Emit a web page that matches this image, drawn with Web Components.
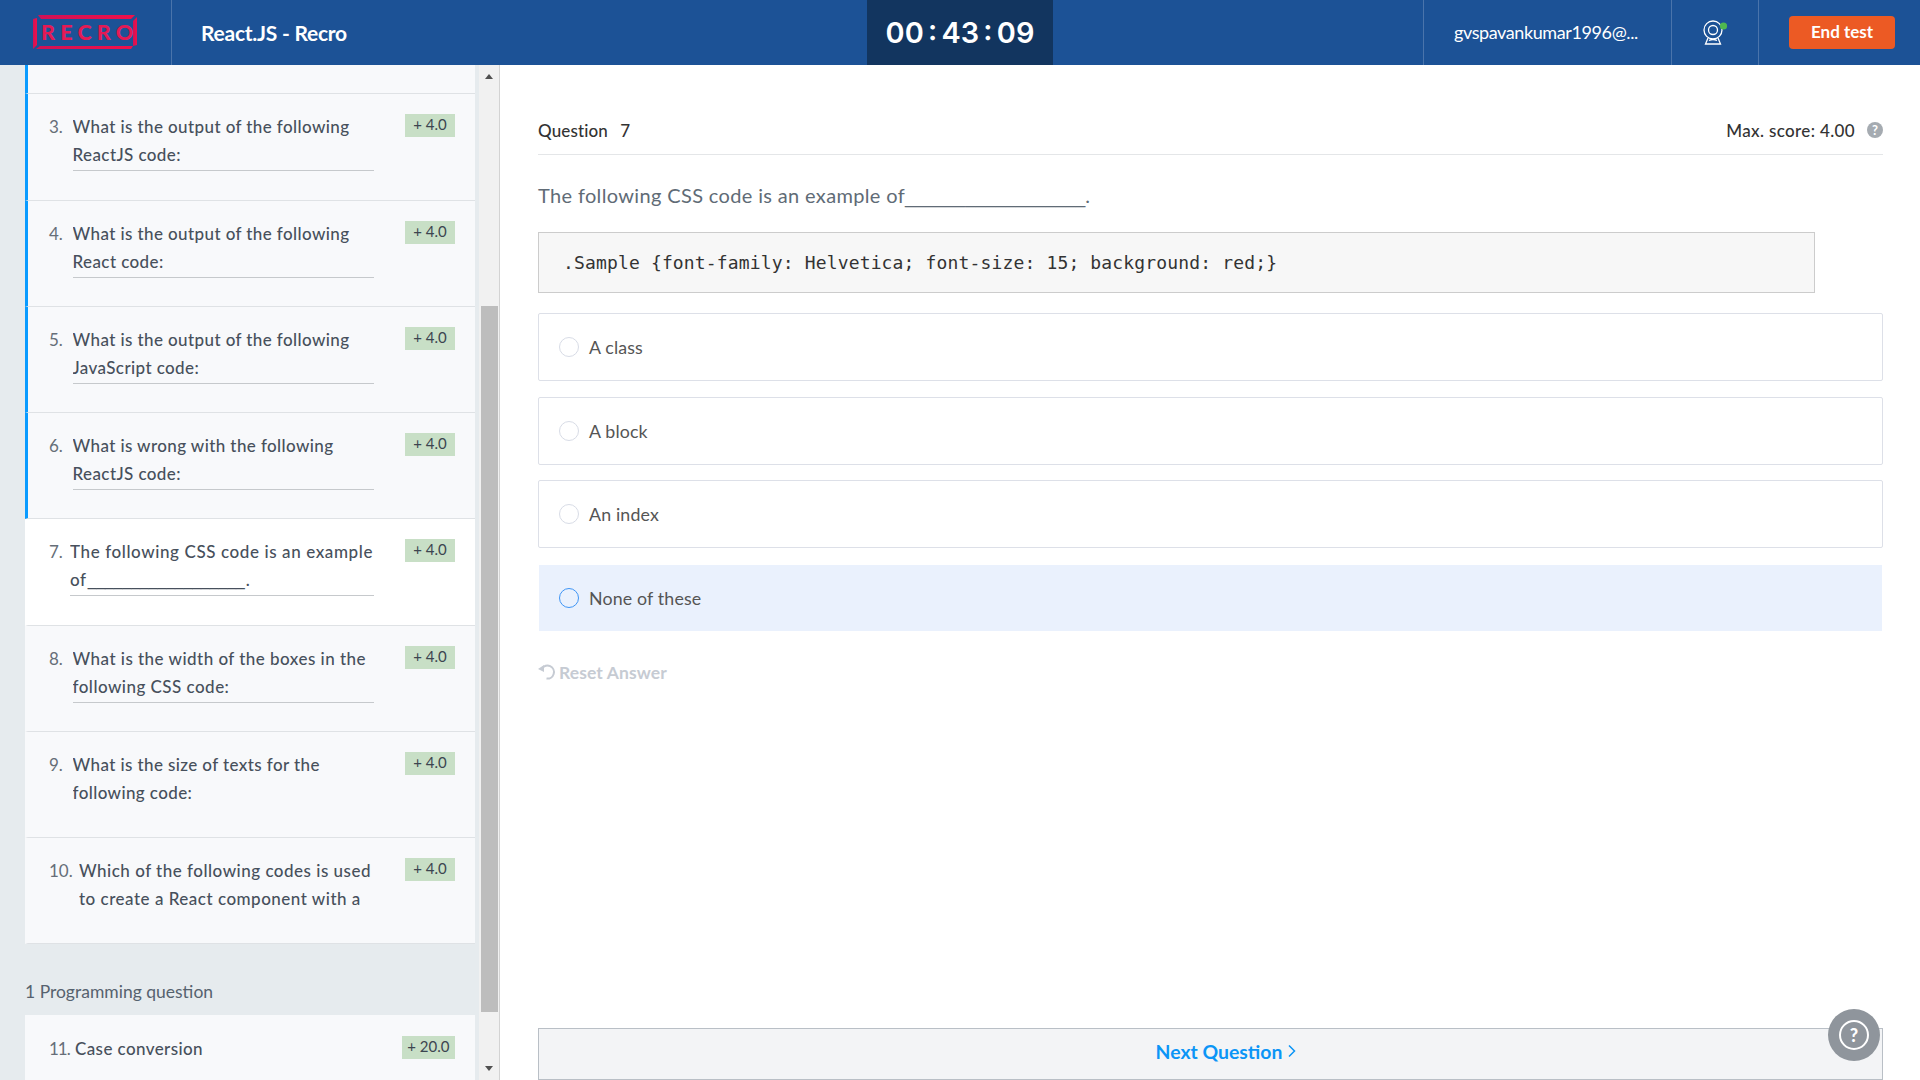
<!DOCTYPE html>
<html lang="en">
<head>
<meta charset="utf-8">
<title>React.JS - Recro</title>
<style>
  html, body { margin: 0; height: 100%; overflow: hidden; }
  body { font-family: "Lato", "Liberation Sans", sans-serif; background: #fff; }
  test-page { height: 100vh; }
  .blank { font-family: "Liberation Sans", sans-serif; font-size: 15.7px; line-height: 1; letter-spacing: 0; margin: 0 1px; }
  .blank-lg { font-family: "Liberation Sans", sans-serif; font-size: 18px; line-height: 1; letter-spacing: 0; }
</style>
</head>
<body>
<test-page>
  <test-header slot="header" name="React.JS - Recro" time="00 : 43 : 09" user="gvspavankumar1996@..."></test-header>
  <test-sidebar slot="side">
    <div class="stub"></div>
    <quiz-item num="3." score="+ 4.0" done lined style="--h:107px">What is the output of the following ReactJS code:</quiz-item>
    <quiz-item num="4." score="+ 4.0" done lined>What is the output of the following React code:</quiz-item>
    <quiz-item num="5." score="+ 4.0" done lined>What is the output of the following JavaScript code:</quiz-item>
    <quiz-item num="6." score="+ 4.0" done lined>What is wrong with the following ReactJS code:</quiz-item>
    <quiz-item num="7." score="+ 4.0" active lined style="--num:21px;--ls:.6px">The following CSS code is an example<br>of<span class="blank">__________________</span>.</quiz-item>
    <quiz-item num="8." score="+ 4.0" lined style="--ls:.47px">What is the width of the boxes in the following CSS code:</quiz-item>
    <quiz-item num="9." score="+ 4.0">What is the size of texts for the following code:</quiz-item>
    <quiz-item num="10." score="+ 4.0" style="--num:30px;--ls:.5px">Which of the following codes is used to create a React component with a</quiz-item>
    <section-title>1 Programming question</section-title>
    <quiz-item num="11." score="+ 20.0" style="--num:26px;--num-ls:-1px;--pt:20px">Case conversion</quiz-item>
  </test-sidebar>
  <question-panel slot="main" number="7" score="4.00">
    <span slot="text">The following CSS code is an example of<span class="blank-lg">__________________</span>.</span>
    <code-box slot="code">.Sample {font-family: Helvetica; font-size: 15; background: red;}</code-box>
    <answer-option>A class</answer-option>
    <answer-option>A block</answer-option>
    <answer-option>An index</answer-option>
    <answer-option selected>None of these</answer-option>
  </question-panel>
</test-page>
<help-button></help-button>

<script>
// small helper so each element just gives its css + markup
function shadow(el, html) {
  el.attachShadow({mode: "open"}).innerHTML = html;
}

class TestPage extends HTMLElement {
  constructor() {
    super();
    shadow(this, `
      <style>
        :host { display: grid; grid-template-columns: 500px 1fr; grid-template-rows: 65px 1fr; }
        .head { grid-column: 1 / 3; }
        .side, .main { min-height: 0; overflow: hidden; display: flex; }
      </style>
      <div class="head"><slot name="header"></slot></div>
      <div class="side"><slot name="side"></slot></div>
      <div class="main"><slot name="main"></slot></div>
    `);
  }
}

class TestHeader extends HTMLElement {
  connectedCallback() {
    shadow(this, `
      <style>
        :host { display: grid; grid-template-columns: 172px 695px 186px 1fr 248px 88px 161px; height: 65px; background: #1c5296; color: #fff; font-family: "Lato", sans-serif; }
        .cell { display: flex; align-items: center; min-width: 0; }
        .logo { padding-left: 33px; border-right: 1px solid #4a74ab; }
        .title { padding: 0 0 1px 29px; font-size: 21px; font-weight: 700; letter-spacing: -.25px; }
        .timer { background: #12355f; justify-content: center; font-family: "Inter", sans-serif; font-size: 28.9px; font-weight: 600; word-spacing: -3px; }
        .user { padding: 0 0 2px 30px; border-left: 1px solid #4a74ab; font-size: 18px; letter-spacing: -.4px; }
        .cam { justify-content: center; border-left: 1px solid #4a74ab; border-right: 1px solid #4a74ab; }
        .cam svg { margin-left: 1px; }
        .end { padding-left: 30px; }
        button { width: 106px; height: 33px; border: 0; border-radius: 4px; background: #ec5a24; color: #fff; font: 700 17px "Lato", sans-serif; padding: 0 0 2px; }
        svg { display: block; }
      </style>
      <div class="cell logo">
        <svg width="105" height="35" viewBox="0 0 105 35">
          <defs><linearGradient id="g" x1="0" x2="1"><stop offset="0" stop-color="#cf1256"/><stop offset="1" stop-color="#f0104a"/></linearGradient></defs>
          <g fill="url(#g)">
            <polygon points="5,0 102,0 98,4 8,4"/>
            <polygon points="0,4 4,3 4,30 0,34"/>
            <polygon points="7,31 97,31 100,31 98,34 3,34"/>
            <polygon points="100,6 104,2 104,30 100,31"/>
          </g>
          <text x="8" y="24.5" font-family="Lato, sans-serif" font-weight="900" font-size="21.5" letter-spacing="5.2" fill="#e41a55">RECRO</text>
        </svg>
      </div>
      <div class="cell title">${this.getAttribute("name")}</div>
      <div class="cell timer">${this.getAttribute("time")}</div>
      <div></div>
      <div class="cell user">${this.getAttribute("user")}</div>
      <div class="cell cam">
        <svg width="28" height="30" viewBox="0 0 28 30" fill="none" stroke="#fff" stroke-width="1.3">
          <circle cx="11" cy="12" r="9"/>
          <circle cx="11" cy="12" r="4.5"/>
          <path d="M6 20 L3.5 26 H18.5 L16 20 M4 26 h14"/>
          <path d="M7 22.5 Q11 20.5 15 22.5"/>
          <circle cx="21.5" cy="8" r="3.6" fill="#4fb84f" stroke="none"/>
        </svg>
      </div>
      <div class="cell end"><button>End test</button></div>
    `);
  }
}

class TestSidebar extends HTMLElement {
  constructor() {
    super();
    shadow(this, `
      <style>
        :host { display: flex; width: 500px; height: 100%; background: #e6ebee; box-sizing: border-box; }
        .list { width: 450px; margin-left: 25px; overflow: hidden; display: flex; flex-direction: column; }
        ::slotted(.stub) { flex: none; height: 29px; background: #f8f9fb; border-left: 3px solid #0a9bff; border-bottom: 1px solid #dfe2e5; box-sizing: border-box; }
        .bar { width: 21px; margin-left: 4px; background: #f1f1f1; border-right: 1px solid #d3d3d3; box-sizing: border-box; display: flex; flex-direction: column; align-items: center; }
        .up, .down { flex: none; width: 0; height: 0; border: 4.5px solid transparent; }
        .up { border-top: 0; border-bottom: 5px solid #505050; margin-top: 9px; }
        .down { border-bottom: 0; border-top: 5px solid #505050; margin-top: 54px; }
        .thumb { width: 17px; height: 706px; margin-top: 227px; background: #bdbdbd; flex: none; }
      </style>
      <div class="list"><slot></slot></div>
      <div class="bar"><div class="up"></div><div class="thumb"></div><div class="down"></div></div>
    `);
  }
}

class QuizItem extends HTMLElement {
  connectedCallback() {
    shadow(this, `
      <style>
        :host { flex: none; display: flex; align-items: flex-start; box-sizing: border-box; height: var(--h, 106.15px); padding: var(--pt, 19px) 20px 0 21px; background: #f8f9fb; border-left: 3px solid transparent; border-bottom: 1px solid #dfe2e5; color: #47505c; font-size: 17px; line-height: 28px; letter-spacing: var(--ls, .4px); font-weight: 500; }
        :host([done]) { border-left-color: #0a9bff; }
        :host([active]) { background: #fff; }
        .num { flex: none; width: var(--num, 23.5px); font-size: 17px; color: #666e78; font-weight: 400; letter-spacing: var(--num-ls, 0); }
        .text { flex: 1; min-width: 0; overflow: hidden; max-height: 57px; padding-bottom: 1px; }
        :host([lined]) .text { border-bottom: 1px solid #c6c9cc; height: 56px; }
        .gap { flex: none; width: 31px; }
        .score { flex: none; box-sizing: border-box; margin-top: 1px; padding: 0 5.5px; height: 23px; min-width: 50px; text-align: center; line-height: 21px; background: #c8dfc6; color: #3c4550; font-size: 15px; font-weight: 400; letter-spacing: 0; white-space: nowrap; }
      </style>
      <span class="num">${this.getAttribute("num")}</span>
      <div class="text"><slot></slot></div>
      <div class="gap"></div>
      <span class="score">${this.getAttribute("score")}</span>
    `);
  }
}

class SectionTitle extends HTMLElement {
  constructor() {
    super();
    shadow(this, `
      <style>
        :host { flex: none; display: flex; align-items: flex-end; height: 71px; box-sizing: border-box; padding-bottom: 10px; color: #56626e; font-size: 17.5px; line-height: 26px; }
      </style>
      <slot></slot>
    `);
  }
}

class QuestionPanel extends HTMLElement {
  connectedCallback() {
    shadow(this, `
      <style>
        :host { flex: 1; min-width: 0; display: flex; flex-direction: column; box-sizing: border-box; padding: 0 37px 0 38px; color: #333; }
        .top { display: flex; align-items: center; justify-content: space-between; height: 90px; box-sizing: border-box; border-bottom: 1px solid #e4e6e8; font-size: 17px; letter-spacing: .12px; padding-top: 41px; font-weight: 500; }
        .top b { font-weight: 500; margin-left: 8px; }
        .max { display: flex; align-items: center; gap: 12px; letter-spacing: .35px; }
        .tip { width: 16px; height: 16px; border-radius: 50%; background: #a5abb1; color: #fff; font-size: 13px; font-weight: 700; line-height: 16px; text-align: center; letter-spacing: 0; }
        .text { margin-top: 26px; font-size: 20px; line-height: 28px; color: #606b76; letter-spacing: .35px; }
        .options { display: flex; flex-direction: column; gap: 15.5px; margin-top: 20px; }
        .reset { display: flex; align-items: center; gap: 3px; margin-top: 29px; height: 24px; font-size: 17.5px; font-weight: 700; color: #c6cbd3; letter-spacing: .1px; }
        .reset svg { margin-left: -1px; }
        .next { margin-top: auto; height: 52px; box-sizing: border-box; border: 1px solid #b9bfc6; background: #f3f4f6; color: #0b95f6; font-size: 19.4px; font-weight: 700; display: flex; align-items: center; justify-content: center; gap: 6px; padding: 0 0 6px 31px; }
      </style>
      <div class="top">
        <div>Question<b>&nbsp;${this.getAttribute("number")}</b></div>
        <div class="max">Max. score: ${this.getAttribute("score")}<span class="tip">?</span></div>
      </div>
      <div class="text"><slot name="text"></slot></div>
      <slot name="code"></slot>
      <div class="options"><slot></slot></div>
      <div class="reset">
        <svg width="19" height="18" viewBox="0 0 19 18" fill="none" stroke="#c6cbd3" stroke-width="2">
          <path d="M5 5.5 A6.5 6.5 0 1 1 9.5 15.5"/>
          <path d="M1 6 L7 2 V9 Z" fill="#c6cbd3" stroke="none"/>
        </svg>
        Reset Answer
      </div>
      <div class="next">Next Question
        <svg width="8" height="14" viewBox="0 0 8 14" fill="none" stroke="#0b95f6" stroke-width="1.5"><path d="M1 1.5 L6.5 7 L1 12.5"/></svg>
      </div>
    `);
  }
}

class CodeBox extends HTMLElement {
  constructor() {
    super();
    shadow(this, `
      <style>
        :host { display: flex; align-items: center; box-sizing: border-box; width: 1277px; height: 61px; margin-top: 23px; padding-left: 24px; background: #f7f7f7; border: 1px solid #ccc; font-family: "DejaVu Sans Mono", monospace; font-size: 18px; letter-spacing: .15px; color: #333; }
        span { white-space: pre; }
      </style>
      <span><slot></slot></span>
    `);
  }
}

class AnswerOption extends HTMLElement {
  constructor() {
    super();
    shadow(this, `
      <style>
        :host { display: flex; align-items: center; box-sizing: border-box; height: 68px; padding-left: 20px; border: 1px solid #dde0e8; border-radius: 2px; font-size: 17.8px; letter-spacing: .15px; color: #555; }
        :host([selected]) { background: #eaf1fd; border: 0; border-radius: 0; height: 66px; margin: 1.5px 1px 0; }
        .dot { width: 20px; height: 20px; box-sizing: border-box; border: 1px solid #d8dce6; border-radius: 50%; margin-right: 10px; background: #fff; }
        :host([selected]) .dot { border: 1.5px solid #3f95f5; background: transparent; }
      </style>
      <span class="dot"></span><slot></slot>
    `);
  }
}

class HelpButton extends HTMLElement {
  constructor() {
    super();
    shadow(this, `
      <style>
        :host { position: fixed; right: 40px; bottom: 19px; width: 52px; height: 52px; border-radius: 50%; background: #8f959c; display: flex; align-items: center; justify-content: center; }
        span { width: 30px; height: 30px; box-sizing: border-box; border: 2px solid #fff; border-radius: 50%; color: #fff; font: 900 18px/26px "Lato", sans-serif; text-align: center; }
      </style>
      <span>?</span>
    `);
  }
}

customElements.define("test-page", TestPage);
customElements.define("test-header", TestHeader);
customElements.define("test-sidebar", TestSidebar);
customElements.define("quiz-item", QuizItem);
customElements.define("section-title", SectionTitle);
customElements.define("question-panel", QuestionPanel);
customElements.define("code-box", CodeBox);
customElements.define("answer-option", AnswerOption);
customElements.define("help-button", HelpButton);
</script>
</body>
</html>
